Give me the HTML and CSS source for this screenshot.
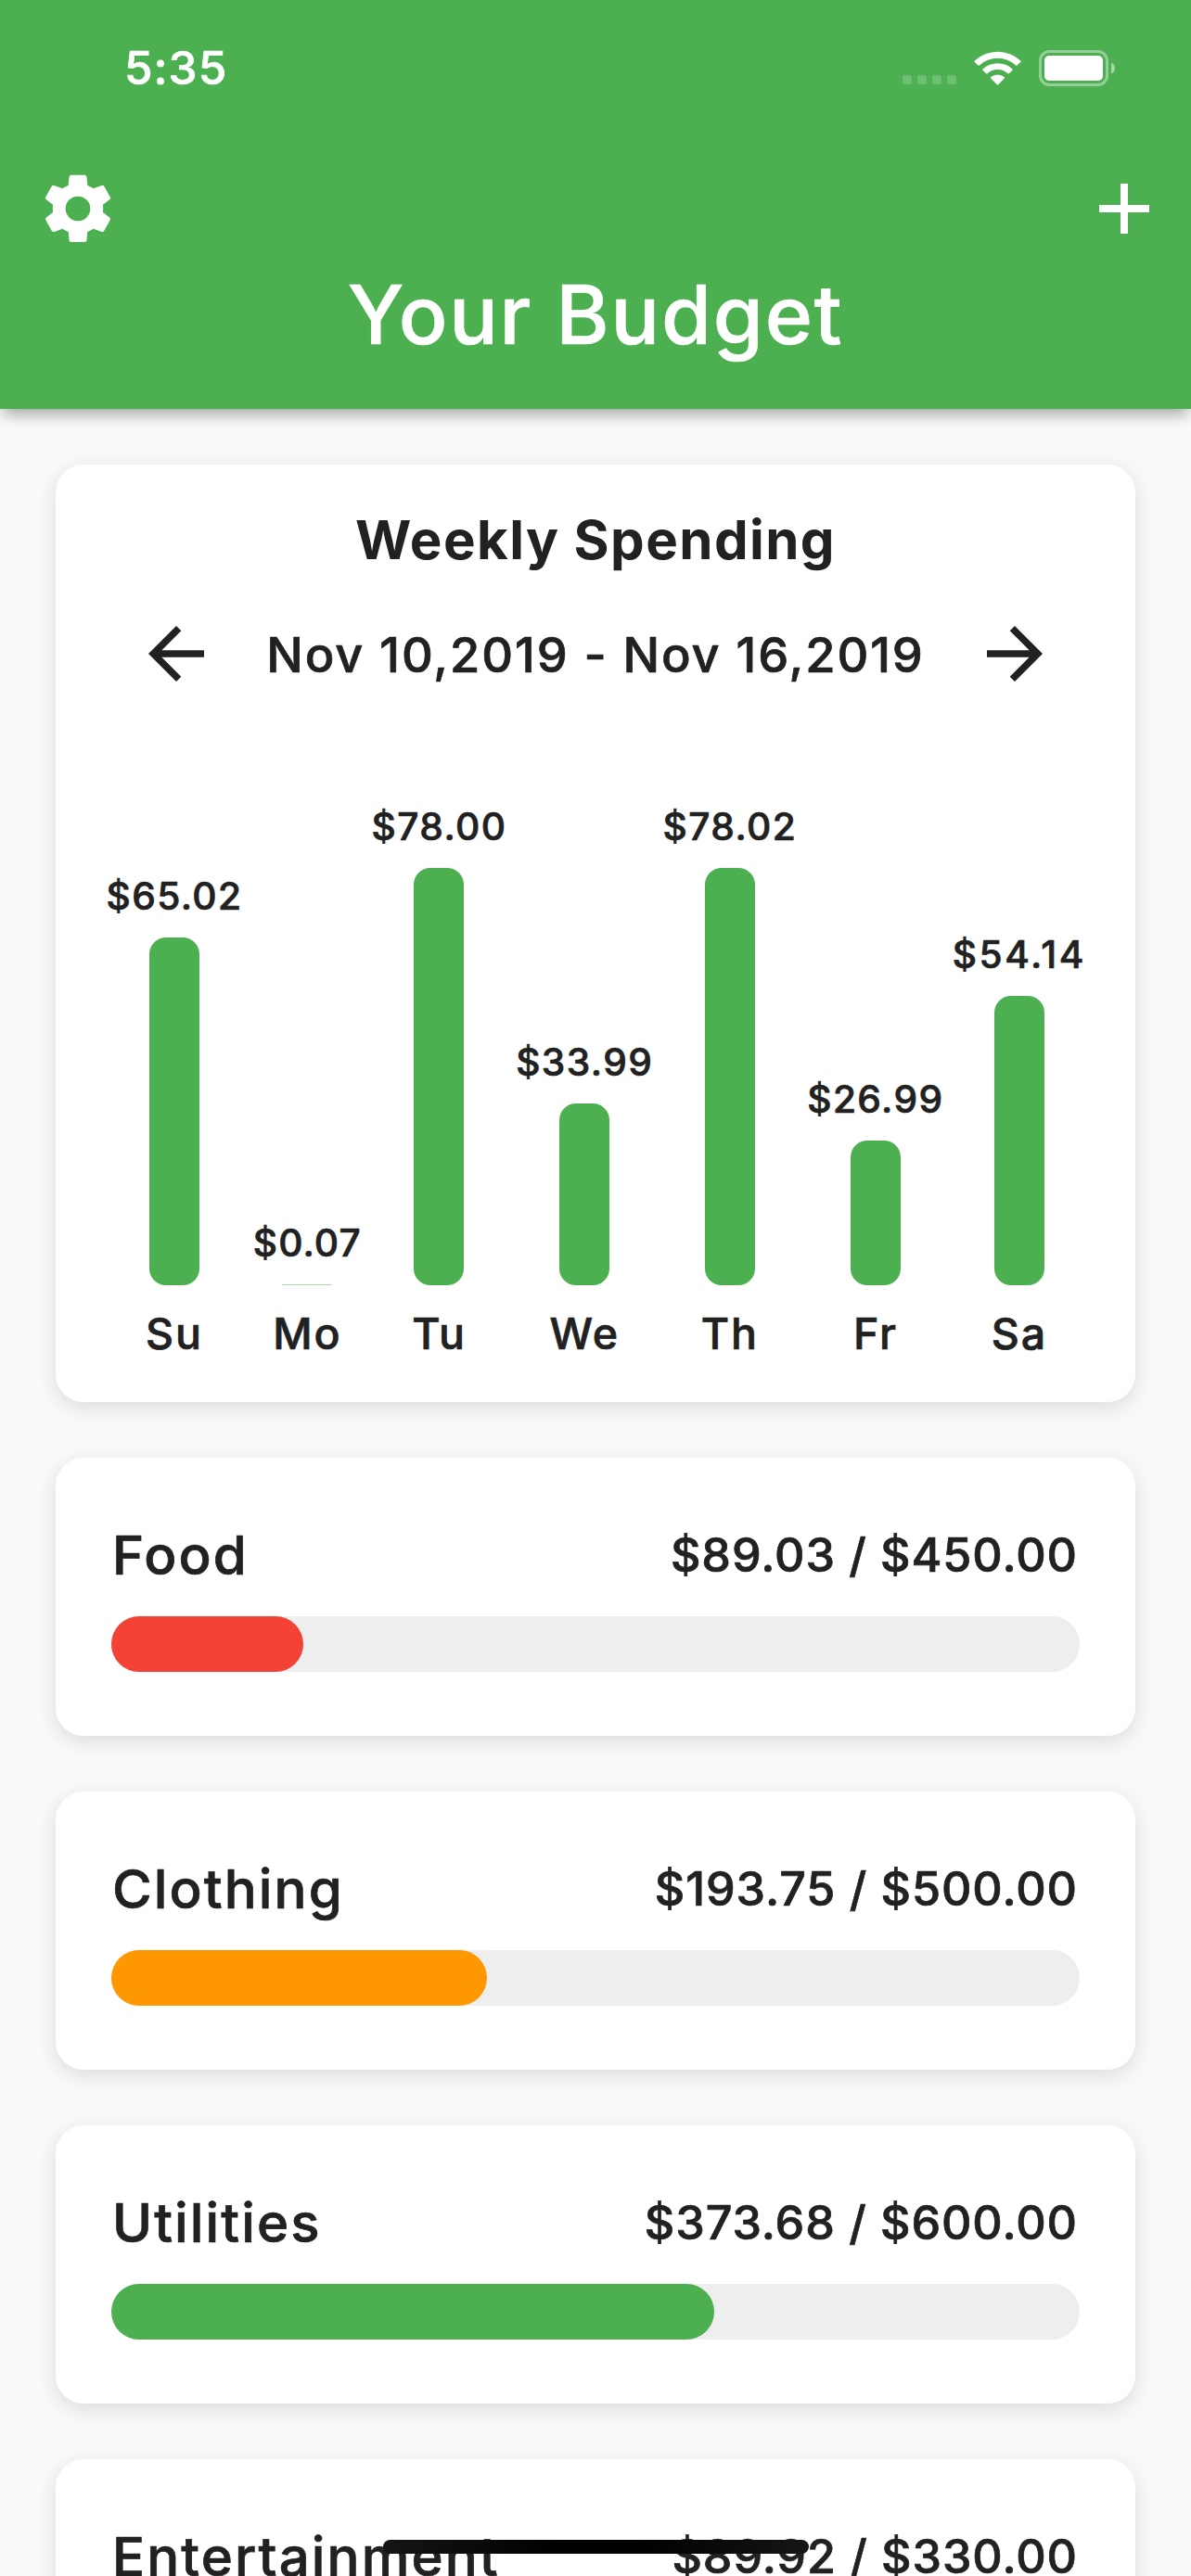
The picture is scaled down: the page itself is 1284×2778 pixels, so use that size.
FILE: index.html
```html
<!DOCTYPE html>
<html lang="en">
<head>
<meta charset="utf-8">
<title>Your Budget</title>
<link rel="stylesheet" href="styles.css">
</head>
<body>
<div class="screen">
  <header class="app-bar">
    <div class="status-bar">
      <span class="time">5:35</span>
      <div class="status-icons">
        <div class="signal"><i></i><i></i><i></i><i></i></div>
        <svg class="wifi" viewBox="0 0 153 112" aria-hidden="true">
          <g fill="#fff">
            <path d="M1.5 36A3.500 3.500 0 0 1 1.500 31.500A110 110 0 0 1 151.500 31.500A3.500 3.500 0 0 1 151.500 36L140 47Q138 48.500 136 47A88 88 0 0 0 17 47Q15 48.500 13 47Z"/>
            <path d="M28 62.500Q26.500 60.500 28 59A71.500 71.500 0 0 1 125 59Q126.500 60.500 125 62.500L114 73.500Q112 75 110 73.500A50 50 0 0 0 43 73.500Q41 75 39 73.500Z"/>
            <path d="M54.500 89Q52.500 87 54.500 85A34.500 34.500 0 0 1 98.500 85Q100.500 87 98.500 89L78.500 110Q76.500 112 74.500 110Z"/>
          </g>
        </svg>
        <svg class="battery" viewBox="0 0 82 39" aria-hidden="true">
          <rect x="1.500" y="1.500" width="72" height="36" rx="10" fill="none" stroke="#fff" stroke-opacity=".4" stroke-width="3"/>
          <rect x="6" y="6" width="63" height="27" rx="5" fill="#fff"/>
          <path d="M78 13.500Q82 15.500 82 19.500T78 25.500Z" fill="#fff" fill-opacity=".5"/>
        </svg>
      </div>
    </div>
    <div class="toolbar">
      <svg class="settings" viewBox="0 0 270 270" aria-label="Settings">
        <path fill="#fff" fill-rule="evenodd" d="M110 26H154Q159 26 160 31L163 60Q173 64 182 70L209 60Q214 58 217 63L236 97Q239 102 235 105L213 122Q214 135 213 147L235 164Q239 167 236 172L217 206Q214 211 209 210L182 200Q173 206 163 210L160 239Q159 243 154 243H110Q105 243 104 239L101 210Q91 206 82 200L56 210Q50 211 47 206L28 172Q25 167 29 164L51 147Q50 135 51 122L29 105Q25 102 28 97L47 63Q50 58 55 60L82 70Q91 64 101 60L104 31Q105 26 110 26ZM132 95A40 40 0 1 0 132 175A40 40 0 1 0 132 95Z"/>
      </svg>
      <svg class="add" viewBox="0 0 54 54" aria-label="Add">
        <path fill="#fff" d="M23 0H31V23H54V31H31V54H23V31H0V23H23Z"/>
      </svg>
    </div>
    <h1 class="title">Your Budget</h1>
  </header>

  <main class="content">
    <section class="card spending">
      <h2 class="spending-title">Weekly Spending</h2>
      <div class="week">
        <svg class="arrow" viewBox="0 0 24 24" aria-label="Previous week"><path d="M20 11H7.830l5.590-5.590L12 4l-8 8 8 8 1.410-1.410L7.830 13H20z"/></svg>
        <span class="range">Nov 10,2019 - Nov 16,2019</span>
        <svg class="arrow" viewBox="0 0 24 24" aria-label="Next week"><path d="M12 4l-1.410 1.410L16.170 11H4v2h12.170l-5.580 5.590L12 20l8-8z"/></svg>
      </div>
      <div class="chart">
        <div class="day"><span class="value">$65.02</span><div class="bar" style="height:375px"></div><span class="label">Su</span></div>
        <div class="day"><span class="value value-mo">$0.07</span><div class="bar bar-trace" style="height:1px"></div><span class="label">Mo</span></div>
        <div class="day"><span class="value">$78.00</span><div class="bar" style="height:450px"></div><span class="label">Tu</span></div>
        <div class="day"><span class="value">$33.99</span><div class="bar" style="height:196px"></div><span class="label">We</span></div>
        <div class="day"><span class="value">$78.02</span><div class="bar" style="height:450px"></div><span class="label">Th</span></div>
        <div class="day"><span class="value">$26.99</span><div class="bar" style="height:156px"></div><span class="label">Fr</span></div>
        <div class="day"><span class="value value-sa">$54.14</span><div class="bar" style="height:312px"></div><span class="label">Sa</span></div>
      </div>
    </section>

    <section class="card budget">
      <div class="budget-row"><span class="name">Food</span><span class="amount">$89.03 / $450.00</span></div>
      <div class="track"><div class="fill fill-red" style="width:19.78%"></div></div>
    </section>
    <section class="card budget">
      <div class="budget-row"><span class="name">Clothing</span><span class="amount">$193.75 / $500.00</span></div>
      <div class="track"><div class="fill fill-orange" style="width:38.75%"></div></div>
    </section>
    <section class="card budget">
      <div class="budget-row"><span class="name">Utilities</span><span class="amount">$373.68 / $600.00</span></div>
      <div class="track"><div class="fill fill-green" style="width:62.28%"></div></div>
    </section>
    <section class="card budget">
      <div class="budget-row"><span class="name">Entertainment</span><span class="amount">$89.92 / $330.00</span></div>
      <div class="track"><div class="fill fill-orange" style="width:27.25%"></div></div>
    </section>
  </main>
  <div class="home-indicator"></div>
</div>
</body>
</html>
```
FILE: styles.css
```css
* { box-sizing: border-box; }

body {
  margin: 0;
  font-family: Inter, Roboto, "Liberation Sans", sans-serif;
  font-weight: 500;
  color: #212121;
  background: #fafafa;
  -webkit-text-stroke: .7px currentColor;
}

.screen {
  position: relative;
  width: 1284px;
  height: 2778px;
  overflow: hidden;
}

/* App bar */
.app-bar {
  height: 441px;
  color: #fff;
  background: #4caf50;
  box-shadow: 0 9px 15px -3px rgba(0, 0, 0, .34);
}

.status-bar {
  display: flex;
  align-items: center;
  justify-content: space-between;
  height: 146px;
  padding: 0 82px 0 134px;
}

.time {
  font-size: 49.5px;
  line-height: 60px;
  letter-spacing: 1px;
}

.status-icons {
  display: flex;
  align-items: center;
}

.signal {
  display: flex;
  align-items: flex-end;
  gap: 6px;
  height: 36px;
  margin-right: 19px;
}

.signal i {
  width: 10px;
  height: 10px;
  border-radius: 3px;
  background: rgba(255, 255, 255, .2);
}

.wifi {
  width: 51px;
  height: 37px;
  margin-right: 19px;
}

.battery {
  width: 82px;
  height: 39px;
}

.toolbar {
  display: flex;
  align-items: center;
  justify-content: space-between;
  height: 158px;
  padding: 0 45px 0 40px;
}

.settings { width: 90px; height: 90px; }
.add { width: 54px; height: 54px; }

.title {
  margin: 0;
  font-size: 87.3px;
  font-weight: 500;
  line-height: 70px;
  letter-spacing: 1.85px;
  text-align: center;
}

/* Cards */
.content {
  display: flex;
  flex-direction: column;
  gap: 60px;
  padding: 60px;
}

.card {
  flex: none;
  border-radius: 30px;
  background: #fff;
  box-shadow: 0 6px 24px rgba(0, 0, 0, .13);
}

.spending {
  height: 1011px;
  padding-top: 36px;
}

.spending-title {
  margin: 0;
  font-size: 58.2px;
  font-weight: 700;
  line-height: 90px;
  letter-spacing: 1.42px;
  text-align: center;
  -webkit-text-stroke: 0;
}

.week {
  display: flex;
  align-items: center;
  justify-content: space-between;
  height: 90px;
  margin-top: 33px;
  padding: 0 85px;
}

.arrow {
  width: 90px;
  height: 90px;
  fill: #212121;
}

.range {
  padding-top: 2px;
  font-size: 52.4px;
  line-height: 60px;
  letter-spacing: 1.92px;
  white-space: nowrap;
}

/* Weekly chart */
.chart {
  display: grid;
  grid-template-columns: 156px 130.6px 153.8px 159.6px 153.8px 160.2px 149.8px;
  align-items: end;
  height: 718px;
  padding-left: 50px;
}

.day {
  display: flex;
  flex-direction: column;
  align-items: center;
}

.value {
  margin-bottom: 19px;
  font-size: 40.7px;
  line-height: 50px;
  letter-spacing: 1.4px;
}

.value-mo { letter-spacing: 1.1px; }
.value-sa { letter-spacing: 2.5px; }

.bar {
  width: 54px;
  border-radius: 18px;
  background: #4caf50;
}

.bar-trace {
  border-radius: 0;
  opacity: .45;
}

.label {
  margin-top: 22px;
  font-size: 46.5px;
  line-height: 60px;
  letter-spacing: 1.9px;
}

/* Budget cards */
.budget {
  height: 300px;
  padding: 75px 60px 0;
}

.budget-row {
  display: flex;
  align-items: center;
  justify-content: space-between;
  height: 60px;
  margin-bottom: 36px;
  padding: 0 2px 0 1px;
}

.name {
  font-size: 58.2px;
  line-height: 60px;
  letter-spacing: 2.1px;
}

.amount {
  font-size: 50.3px;
  line-height: 60px;
  letter-spacing: .92px;
}

.track {
  height: 60px;
  border-radius: 30px;
  background: #eee;
}

.fill {
  height: 60px;
  border-radius: 30px;
}

.fill-red { background: #f44336; }
.fill-orange { background: #ff9800; }
.fill-green { background: #4caf50; }

/* Overlays the scrolling content */
.home-indicator {
  position: absolute;
  left: 413px;
  bottom: 24px;
  width: 459px;
  height: 15px;
  border-radius: 7.5px;
  background: linear-gradient(90deg, #151515, #000 40%, #000 60%, #151515);
}
```
